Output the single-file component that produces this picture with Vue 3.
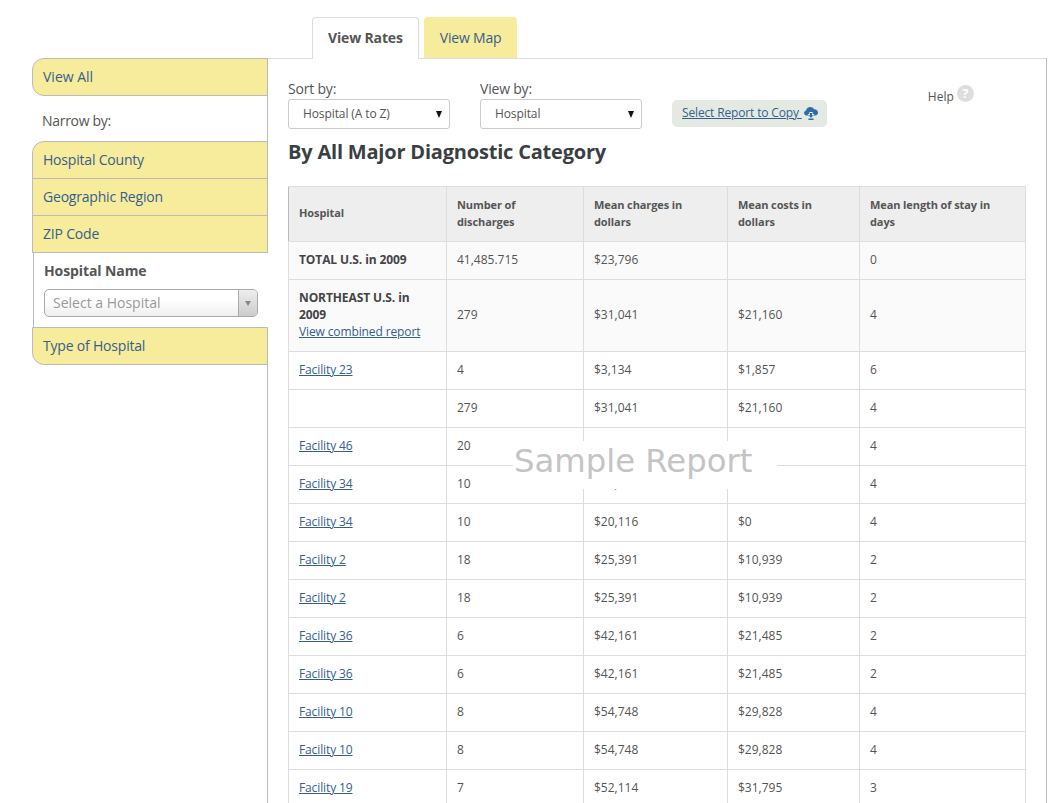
<script setup>
const rows = [
  { name: 'Facility 23', link: true, n: '4', charges: '$3,134', costs: '$1,857', stay: '6' },
  { name: '', n: '279', charges: '$31,041', costs: '$21,160', stay: '4' },
  { name: 'Facility 46', link: true, n: '20', charges: '', costs: '', stay: '4' },
  { name: 'Facility 34', link: true, n: '10', charges: '$20,116', costs: '$0', stay: '4' },
  { name: 'Facility 34', link: true, n: '10', charges: '$20,116', costs: '$0', stay: '4' },
  { name: 'Facility 2', link: true, n: '18', charges: '$25,391', costs: '$10,939', stay: '2' },
  { name: 'Facility 2', link: true, n: '18', charges: '$25,391', costs: '$10,939', stay: '2' },
  { name: 'Facility 36', link: true, n: '6', charges: '$42,161', costs: '$21,485', stay: '2' },
  { name: 'Facility 36', link: true, n: '6', charges: '$42,161', costs: '$21,485', stay: '2' },
  { name: 'Facility 10', link: true, n: '8', charges: '$54,748', costs: '$29,828', stay: '4' },
  { name: 'Facility 10', link: true, n: '8', charges: '$54,748', costs: '$29,828', stay: '4' },
  { name: 'Facility 19', link: true, n: '7', charges: '$52,114', costs: '$31,795', stay: '3' }
]
</script>

<template>
  <div class="page">
    <nav class="tabs">
      <a class="tab active">View Rates</a>
      <a class="tab">View Map</a>
    </nav>
    <div class="main">
      <aside class="side">
        <a class="acc single">View All</a>
        <p class="narrow">Narrow by:</p>
        <a class="acc first">Hospital County</a>
        <a class="acc">Geographic Region</a>
        <a class="acc">ZIP Code</a>
        <div class="open">
          <div class="open-title">Hospital Name</div>
          <div class="chosen">
            <span class="chosen-text">Select a Hospital</span>
            <span class="chosen-btn"><i class="tri"></i></span>
          </div>
        </div>
        <a class="acc last">Type of Hospital</a>
      </aside>
      <section class="content">
        <div class="filters">
          <div class="field">
            <label>Sort by:</label>
            <div class="sel"><span>Hospital (A to Z)</span><i class="arrow"></i></div>
          </div>
          <div class="field">
            <label>View by:</label>
            <div class="sel"><span>Hospital</span><i class="arrow"></i></div>
          </div>
          <div class="copy">
            <a>Select Report to Copy </a>
            <svg width="14" height="14" viewBox="0 0 14 14">
              <path fill="#2f6ca8" d="M3 9.6C1.3 9.6 0 8.5 0 7c0-1.3.9-2.3 2.1-2.6C2.4 2.4 4.1 1 6.2 1c1.7 0 3.1.9 3.8 2.3 2.2-.2 4 1.4 4 3.4 0 1.6-1.5 2.9-3.4 2.9z" />
              <path fill="#fff" d="M5.4 6h3.2v2.2h1.9L7 11.6 3.5 8.2h1.9z" />
              <path fill="#2f6ca8" d="M6 7h2v2.2h1.4L7 12 4.6 9.2H6zM4.4 12.4h5.2V14H4.4z" />
            </svg>
          </div>
          <div class="help">
            <span class="help-text">Help</span>
            <span class="q">?</span>
          </div>
        </div>
        <h2 class="title">By All Major Diagnostic Category</h2>
        <div class="table-wrap">
          <table>
            <colgroup>
              <col class="c1" /><col class="c2" /><col class="c3" /><col class="c4" /><col class="c5" />
            </colgroup>
            <thead>
              <tr>
                <th class="single-line">Hospital</th>
                <th>Number of discharges</th>
                <th>Mean charges in dollars</th>
                <th>Mean costs in dollars</th>
                <th>Mean length of stay in days</th>
              </tr>
            </thead>
            <tbody>
              <tr class="sum">
                <td><b>TOTAL U.S. in 2009</b></td>
                <td>41,485.715</td>
                <td>$23,796</td>
                <td></td>
                <td>0</td>
              </tr>
              <tr class="sum tall">
                <td><b>NORTHEAST U.S. in 2009</b><br /><a>View combined report</a></td>
                <td>279</td>
                <td>$31,041</td>
                <td>$21,160</td>
                <td>4</td>
              </tr>
              <tr v-for="(r, i) in rows" :key="i">
                <td><a v-if="r.link">{{ r.name }}</a></td>
                <td>{{ r.n }}</td>
                <td>{{ r.charges }}</td>
                <td>{{ r.costs }}</td>
                <td>{{ r.stay }}</td>
              </tr>
            </tbody>
          </table>
          <div class="mark">Sample Report</div>
        </div>
      </section>
    </div>
  </div>
</template>

<style>
html, body { margin: 0; overflow: hidden; background: #fff; }
</style>

<style scoped>
.page {
  height: 803px;
  overflow: hidden;
  box-sizing: border-box;
  padding-top: 17px;
  font-family: "Open Sans", sans-serif;
  font-size: 12px;
  color: #555;
  background: #fff;
}
a { color: #34608f; }

.tabs {
  display: flex;
  gap: 5px;
  margin-left: 312px;
  position: relative;
  z-index: 2;
}
.tab {
  box-sizing: border-box;
  height: 41px;
  padding: 0 16px;
  line-height: 41px;
  font-size: 14px;
  background: #f7ec9b;
  border-radius: 4px 4px 0 0;
  letter-spacing: -0.2px;
}
.tab.active {
  height: 42px;
  margin-bottom: -1px;
  padding: 0 15px;
  background: #fff;
  border: 1px solid #ddd;
  border-bottom: 0;
  font-weight: 700;
  color: #555;
  line-height: 40px;
  letter-spacing: -0.15px;
}

.main { display: flex; margin-left: 32px; }
.side { width: 236px; flex: none; position: relative; z-index: 1; letter-spacing: -0.1px; }
.acc {
  display: block;
  box-sizing: border-box;
  height: 38px;
  margin-top: -1px;
  padding-left: 10px;
  line-height: 36px;
  font-size: 14px;
  background: #f7ec9b;
  border: 1px solid #bbb;
  letter-spacing: -0.2px;
}
.acc.single {
  margin-top: 0;
  border-radius: 12px 0 0 12px;
  letter-spacing: 0;
}
.acc.first { margin-top: 0; border-top-left-radius: 12px; }
.acc.last { margin-top: 0; border-bottom-left-radius: 12px; }
.narrow {
  margin: 0;
  height: 45px;
  padding-left: 10px;
  line-height: 50px;
  font-size: 14px;
  color: #555;
  letter-spacing: -0.3px;
}
.open {
  box-sizing: border-box;
  height: 74px;
  margin-left: 1px;
  padding: 9px 10px 0 10px;
  border-left: 1px solid #bbb;
  background: #fff;
}
.open-title {
  font-size: 14px;
  font-weight: 700;
  line-height: 18px;
  color: #555;
}
.chosen {
  box-sizing: border-box;
  display: flex;
  height: 28px;
  margin-top: 9px;
  width: 214px;
  border: 1px solid #aaa;
  border-radius: 5px;
  background: linear-gradient(#fff 40%, #eee);
  overflow: hidden;
}
.chosen-text {
  flex: 1;
  padding-left: 8px;
  line-height: 26px;
  font-size: 14px;
  color: #999;
  letter-spacing: 0;
}
.chosen-btn {
  width: 18px;
  border-left: 1px solid #aaa;
  background: linear-gradient(#eee, #ccc);
  display: flex;
  align-items: center;
  justify-content: center;
}
.tri {
  width: 0;
  height: 0;
  border: 3.5px solid transparent;
  border-top: 5px solid #888;
  border-bottom: 0;
}

.content {
  box-sizing: border-box;
  width: 780px;
  flex: none;
  margin-left: -1px;
  padding: 20px 20px 0;
  border: 1px solid #ddd;
  border-left-color: #bbb;
  border-right-color: #bbb;
  height: 760px;
}
.filters { display: flex; align-items: flex-start; gap: 30px; }
.field label {
  display: block;
  font-size: 14px;
  line-height: 20px;
  letter-spacing: -0.2px;
}
.sel {
  position: relative;
  box-sizing: border-box;
  width: 162px;
  height: 30px;
  padding-left: 14px;
  border: 1px solid #ccc;
  border-radius: 3px;
  line-height: 28px;
  font-size: 12px;
  color: #555;
  background: #fff;
  letter-spacing: -0.1px;
}
.arrow {
  position: absolute;
  right: 7px;
  top: 11px;
  border: 3.5px solid transparent;
  border-top: 7px solid #111;
  border-bottom: 0;
}
.copy {
  display: flex;
  align-items: center;
  gap: 2px;
  box-sizing: border-box;
  height: 27px;
  margin-top: 21px;
  padding: 0 9px 3px 10px;
  background: #e4eae2;
  border-radius: 5px;
  font-size: 12px;
  letter-spacing: -0.15px;
}
.copy a { text-decoration: underline; white-space: pre; }
.copy svg { margin-top: 2px; }
.help {
  display: flex;
  align-items: flex-start;
  gap: 3px;
  margin-left: 71px;
  margin-top: 6px;
}
.help-text { margin-top: 3px; line-height: 17px; }
.q {
  width: 17px;
  height: 17px;
  border-radius: 50%;
  background: #ddd;
  color: #fff;
  font-weight: 700;
  font-size: 13px;
  line-height: 17px;
  text-align: center;
}
.title {
  margin: 9px 0 0;
  font-size: 20px;
  line-height: 28px;
  font-weight: 700;
  color: #3a3f44;
  letter-spacing: -0.2px;
}
.table-wrap { position: relative; margin-top: 20px; width: 737px; }
table {
  width: 737px;
  table-layout: fixed;
  border-collapse: collapse;
  font-size: 12px;
  line-height: 17px;
}
.c1 { width: 158px; }
.c2 { width: 137px; }
.c3 { width: 144px; }
.c4 { width: 132px; }
.c5 { width: 166px; }
th, td {
  border: 1px solid #ddd;
  padding: 0 10px 2px;
  text-align: left;
  height: 37px;
  color: #555;
  box-sizing: border-box;
}
tr { height: 38px; }
th {
  height: 55px;
  background: #eee;
  font-weight: 700;
  font-size: 11px;
  letter-spacing: -0.1px;
}
th.single-line { padding-bottom: 4px; }
th:first-child { border-left-color: #bbb; }
.sum td { background: #fafafa; }
.sum b { color: #444; letter-spacing: -0.1px; }
.tall { height: 72px; }
td a { text-decoration: underline; letter-spacing: -0.12px; }
.mark {
  position: absolute;
  left: 225px;
  top: 255px;
  box-sizing: border-box;
  height: 48px;
  padding: 0 25px 0 1px;
  background: #fff;
  font-family: "DejaVu Sans", sans-serif;
  font-size: 32.3px;
  line-height: 40px;
  color: #c4c4c4;
}
</style>
